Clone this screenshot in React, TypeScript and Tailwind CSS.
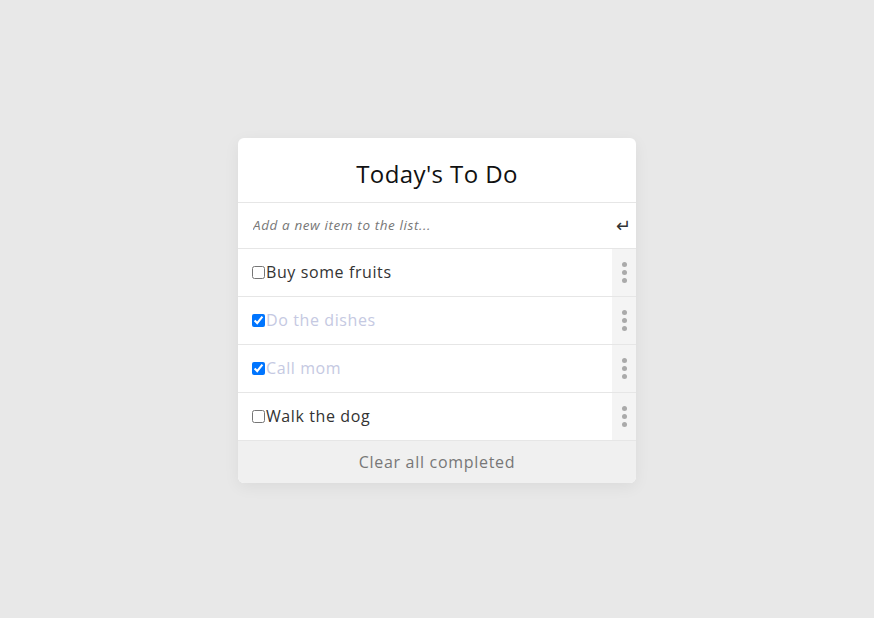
import React, { useState } from 'react';

type Todo = { id: number; text: string; done: boolean };

const initial: Todo[] = [
  { id: 1, text: 'Buy some fruits', done: false },
  { id: 2, text: 'Do the dishes', done: true },
  { id: 3, text: 'Call mom', done: true },
  { id: 4, text: 'Walk the dog', done: false },
];

const App: React.FC = () => {
  const [todos, setTodos] = useState<Todo[]>(initial);

  const toggle = (id: number) =>
    setTodos(todos.map((t) => (t.id === id ? { ...t, done: !t.done } : t)));

  return (
    <div className="min-h-screen w-full bg-[#e8e8e8] flex justify-center pt-[138px] font-['Open_Sans',sans-serif]">
      <div className="w-[398px] h-fit bg-white rounded-md shadow-[0_4px_16px_rgba(0,0,0,0.06)] overflow-hidden">
        {/* Header */}
        <div className="h-[65px] flex items-center justify-center border-b border-[#e6e6e6] pt-[7px]">
          <h1 className="text-[24px] text-[#111] font-normal tracking-[0.4px]">Today's To Do</h1>
        </div>

        {/* New item input */}
        <div className="h-[46px] flex items-center border-b border-[#e6e6e6]">
          <input
            className="flex-1 pl-[15px] text-[13.5px] italic tracking-[0.6px] outline-none placeholder:text-[#777] bg-transparent"
            placeholder="Add a new item to the list..."
          />
          <span className="w-[24px] text-center text-[18px] text-[#333] mr-[1px]">↵</span>
        </div>

        {/* Items */}
        {todos.map((t) => (
          <div key={t.id} className="h-[48px] flex border-b border-[#e6e6e6]">
            <label className="flex-1 flex items-center pl-[14px] text-[16px] tracking-[0.6px] cursor-pointer">
              <input
                type="checkbox"
                checked={t.done}
                onChange={() => toggle(t.id)}
                className="w-[13px] h-[13px] m-0 mr-[1px]"
              />
              <span className={`pb-[2px] ${t.done ? 'text-[#c5c9e2]' : 'text-[#333]'}`}>{t.text}</span>
            </label>
            <div className="w-[24px] bg-[#f4f4f4] flex flex-col items-center justify-center gap-[3px]">
              <span className="w-[5px] h-[5px] rounded-full bg-[#aaa]" />
              <span className="w-[5px] h-[5px] rounded-full bg-[#aaa]" />
              <span className="w-[5px] h-[5px] rounded-full bg-[#aaa]" />
            </div>
          </div>
        ))}

        {/* Footer */}
        <button
          onClick={() => setTodos(todos.filter((t) => !t.done))}
          className="w-full h-[42px] bg-[#f0f0f0] text-[#777] text-[16px] tracking-[0.7px] flex items-center justify-center pb-[1px]"
        >
          Clear all completed
        </button>
      </div>
    </div>
  );
};

export default App;
